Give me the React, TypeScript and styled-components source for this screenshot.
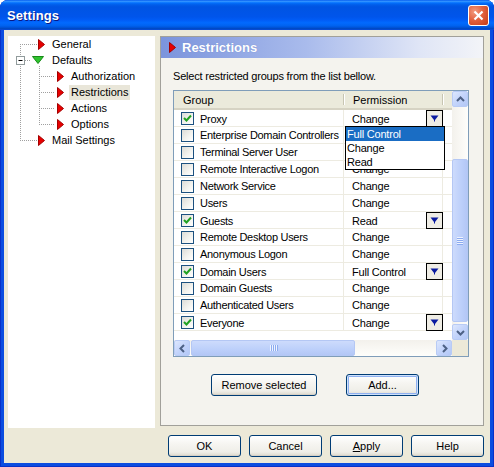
import React from 'react';
import styled, { createGlobalStyle } from 'styled-components';

const font = `"Liberation Sans", Arial, sans-serif`;

const GlobalStyle = createGlobalStyle`
  html, body { margin: 0; padding: 0; background: #ffffff; }
  body { font-family: ${font}; font-size: 11px; color: #000; }
  * { box-sizing: border-box; }
`;

const Window = styled.div`
  width: 494px;
  height: 467px;
  display: flex;
  flex-direction: column;
  background: #0b4de0;
  border-radius: 8px 8px 0 0;
  overflow: hidden;
  box-shadow: inset 1px 0 #0831c9, inset -1px 0 #0831c9, inset 0 -1px #0831c9;
`;

const TitleBar = styled.div`
  height: 30px;
  flex: none;
  display: flex;
  align-items: center;
  justify-content: space-between;
  padding: 0 5px 0 7px;
  background: linear-gradient(
    #0058ee 0%, #3593ff 4%, #288eff 6%, #127dff 8%, #036ffc 10%, #0262ee 14%,
    #0057e5 20%, #0054e3 24%, #0055eb 56%, #005bf5 66%, #026afe 76%, #0062ef 86%,
    #0052d6 92%, #0047c0 96%, #0b4de0 100%
  );
`;

const Title = styled.div`
  color: #fff;
  font: bold 13px ${font};
  text-shadow: 1px 1px #0a1883;
  letter-spacing: 0.1px;
`;

const CloseButton = styled.div`
  width: 21px;
  height: 21px;
  border: 1px solid #fff;
  border-radius: 3px;
  background: radial-gradient(circle at 30% 30%, #f39b7f 0%, #e2623f 45%, #c53b16 100%);
  display: flex;
  align-items: center;
  justify-content: center;
`;

const Client = styled.div`
  flex: 1;
  margin: 0 4px 4px;
  background: #ece9d8;
  display: flex;
  flex-direction: column;
  padding: 6px 6px 0 4px;
`;

const Main = styled.div`
  display: flex;
  gap: 5px;
  height: 392px;
  align-items: flex-start;
`;

const Tree = styled.div`
  width: 147px;
  height: 392px;
  background: #fff;
  position: relative;
`;

const TreeLines = styled.svg`
  position: absolute;
  left: 0;
  top: 0;
  pointer-events: none;
`;

const TreeRow = styled.div<{ $level: number }>`
  position: relative;
  height: 16px;
  display: flex;
  align-items: center;
  padding-left: ${p => 30 + p.$level * 19}px;
`;

const NodeIcon = styled.span<{ $shift?: number }>`
  width: 12px;
  display: flex;
  align-items: center;
  margin-left: ${p => p.$shift ?? 0}px;
  margin-right: ${p => -(p.$shift ?? 0)}px;
`;

const NodeLabel = styled.span<{ $selected?: boolean }>`
  padding: 0 2px;
  line-height: 15px;
  white-space: nowrap;
  background: ${p => (p.$selected ? '#e9e6d9' : 'transparent')};
`;

const Panel = styled.div`
  width: 324px;
  height: 390px;
  border: 1px solid #a1a09a;
  background: #f4f3ee;
  display: flex;
  flex-direction: column;
`;

const PanelHeader = styled.div`
  height: 21px;
  display: flex;
  align-items: center;
  gap: 6px;
  padding-left: 8px;
  background: linear-gradient(to right, #7b94dc 0%, #a9bbec 45%, #dfe5f6 80%, #f3f4f8 100%);
  color: #fff;
  font: bold 13px ${font};
  text-shadow: 0 0 1px #6a82c8;
`;

const PanelBody = styled.div`
  display: flex;
  flex-direction: column;
  padding: 0 14px 0 12px;
`;

const Description = styled.div`
  margin-top: 11px;
  line-height: 14px;
  letter-spacing: -0.2px;
`;

const ListBox = styled.div`
  margin-top: 7px;
  width: 296px;
  height: 267px;
  border: 1px solid #7f9db9;
  background: #fff;
  display: grid;
  grid-template-columns: 1fr 16px;
  grid-template-rows: 1fr 16px;
`;

const ListView = styled.div`
  position: relative;
`;

const HeaderRow = styled.div`
  height: 19px;
  display: grid;
  grid-template-columns: 170px 99px 1fr;
  background: #ebeadb;
  border-bottom: 2px solid #d6d3c3;
`;

const HeaderCell = styled.div`
  display: flex;
  align-items: center;
  padding-left: 9px;
  position: relative;
  &:not(:last-child)::after {
    content: '';
    position: absolute;
    right: 0;
    top: 3px;
    bottom: 3px;
    width: 1px;
    background: #c7c5b2;
    box-shadow: 1px 0 #fff;
  }
`;

const Row = styled.div`
  height: 17px;
  display: grid;
  grid-template-columns: 170px 99px 1fr;
  border-bottom: 1px solid #edebe1;
`;

const GroupCell = styled.div`
  display: flex;
  align-items: center;
  gap: 6px;
  padding-left: 7px;
  border-right: 1px solid #edebe1;
  white-space: nowrap;
  overflow: hidden;
  letter-spacing: -0.3px;
`;

const PermCell = styled.div`
  display: flex;
  align-items: center;
  justify-content: space-between;
  padding-left: 8px;
  border-right: 1px solid #edebe1;
  position: relative;
  letter-spacing: -0.2px;
`;

const CheckBox = styled.span`
  width: 13px;
  height: 13px;
  flex: none;
  border: 1px solid #1c5180;
  background: linear-gradient(135deg, #dcdcd7 0%, #f4f4f0 60%, #ffffff 100%);
  display: flex;
  align-items: center;
  justify-content: center;
`;

const DropButton = styled.span`
  width: 17px;
  height: 17px;
  margin-right: -1px;
  border: 1px solid #000;
  background: #efede5;
  display: flex;
  align-items: center;
  justify-content: center;
`;

const Popup = styled.div`
  position: absolute;
  left: 1px;
  top: 16px;
  width: 100px;
  border: 1px solid #000;
  background: #fff;
  z-index: 2;
`;

const PopupItem = styled.div<{ $active?: boolean }>`
  height: 14px;
  line-height: 14px;
  padding-left: 1px;
  background: ${p => (p.$active ? '#1a6dc4' : '#fff')};
  color: ${p => (p.$active ? '#fff' : '#000')};
`;

const VScroll = styled.div`
  display: flex;
  flex-direction: column;
  background: linear-gradient(to right, #f3f1ec, #fefefb);
`;

const HScroll = styled.div`
  display: flex;
  background: linear-gradient(#f3f1ec, #fefefb);
`;

const Corner = styled.div`
  background: #ece9d8;
`;

const ScrollButton = styled.div`
  width: 16px;
  height: 16px;
  flex: none;
  border: 1px solid #b8cbf5;
  border-radius: 2px;
  background: linear-gradient(135deg, #dde7fd 0%, #c3d4fb 50%, #b2c7f6 100%);
  display: flex;
  align-items: center;
  justify-content: center;
`;

const VTrack = styled.div`
  flex: 1;
  padding-top: 52px;
`;

const HTrack = styled.div`
  flex: 1;
  padding-left: 1px;
`;

const Thumb = styled.div<{ $vertical?: boolean }>`
  ${p => (p.$vertical ? 'height: 163px; width: 16px;' : 'width: 164px; height: 16px;')}
  border: 1px solid #b4c7f4;
  border-radius: 2px;
  background: ${p =>
    p.$vertical
      ? 'linear-gradient(to right, #cddbfc, #bccffa 60%, #b3c7f6)'
      : 'linear-gradient(#cddbfc, #bccffa 60%, #b3c7f6)'};
  display: flex;
  flex-direction: ${p => (p.$vertical ? 'column' : 'row')};
  align-items: center;
  justify-content: center;
  gap: 1px;
`;

const Grip = styled.span<{ $vertical?: boolean }>`
  ${p => (p.$vertical ? 'width: 6px; height: 1px;' : 'width: 1px; height: 6px;')}
  background: #eef3fe;
  box-shadow: ${p => (p.$vertical ? '0 1px #8cabf0' : '1px 0 #8cabf0')};
`;

const ActionRow = styled.div`
  display: flex;
  gap: 29px;
  margin-top: 17px;
  padding-left: 38px;
`;

const Button = styled.button<{ $w?: number; $focused?: boolean }>`
  height: 22px;
  width: ${p => p.$w ?? 73}px;
  padding: 0;
  font: 11px ${font};
  color: #000;
  border: 1px solid #003c74;
  border-radius: 3px;
  background: linear-gradient(#ffffff 0%, #f6f5f1 40%, #efeee8 80%, #dcd8cc 100%);
  box-shadow: ${p =>
    p.$focused ? 'inset 0 0 0 1px #cee1fb, inset 0 0 0 2px #8fb0f0' : 'inset 0 -1px #d6d0c5'};
`;

const Footer = styled.div`
  display: flex;
  justify-content: flex-end;
  gap: 8px;
  margin-top: 7px;
`;

const RedArrow = () => (
  <svg width="7" height="11" viewBox="0 0 7 11">
    <polygon points="0.5,0.5 6.5,5.5 0.5,10.5" fill="#e80000" stroke="#a30000" strokeWidth="1" />
  </svg>
);

const GreenArrow = () => (
  <svg width="12" height="8" viewBox="0 0 12 8">
    <polygon points="0.5,0.5 11.5,0.5 6,7.5" fill="#2fc42f" stroke="#178a17" strokeWidth="1" />
  </svg>
);

const Check = () => (
  <svg width="9" height="9" viewBox="0 0 9 9">
    <path d="M1 4 L3.5 6.5 L8 1.5" fill="none" stroke="#21a121" strokeWidth="2" />
  </svg>
);

const DropArrow = () => (
  <svg width="9" height="7" viewBox="0 0 9 7">
    <polygon points="0.5,0.5 8.5,0.5 5,5 4,5" fill="#0a1aa0" />
    <rect x="4" y="5" width="1" height="1.5" fill="#0a1aa0" />
  </svg>
);

const Chevron = ({ rotate }: { rotate: number }) => (
  <svg width="9" height="9" viewBox="0 0 9 9" style={{ transform: `rotate(${rotate}deg)` }}>
    <path d="M1 6 L4.5 2.5 L8 6" fill="none" stroke="#4d6185" strokeWidth="2" />
  </svg>
);

type Node = { label: string; level: number; icon: 'red' | 'green'; selected?: boolean };

const nodes: Node[] = [
  { label: 'General', level: 0, icon: 'red' },
  { label: 'Defaults', level: 0, icon: 'green' },
  { label: 'Authorization', level: 1, icon: 'red' },
  { label: 'Restrictions', level: 1, icon: 'red', selected: true },
  { label: 'Actions', level: 1, icon: 'red' },
  { label: 'Options', level: 1, icon: 'red' },
  { label: 'Mail Settings', level: 0, icon: 'red' },
];

type Group = { name: string; checked: boolean; perm: string };

const groups: Group[] = [
  { name: 'Proxy', checked: true, perm: 'Change' },
  { name: 'Enterprise Domain Controllers', checked: false, perm: 'Change' },
  { name: 'Terminal Server User', checked: false, perm: 'Change' },
  { name: 'Remote Interactive Logon', checked: false, perm: 'Change' },
  { name: 'Network Service', checked: false, perm: 'Change' },
  { name: 'Users', checked: false, perm: 'Change' },
  { name: 'Guests', checked: true, perm: 'Read' },
  { name: 'Remote Desktop Users', checked: false, perm: 'Change' },
  { name: 'Anonymous Logon', checked: false, perm: 'Change' },
  { name: 'Domain Users', checked: true, perm: 'Full Control' },
  { name: 'Domain Guests', checked: false, perm: 'Change' },
  { name: 'Authenticated Users', checked: false, perm: 'Change' },
  { name: 'Everyone', checked: true, perm: 'Change' },
];

const dot = { stroke: '#a0a0a0', strokeDasharray: '1 1', shapeRendering: 'crispEdges' as const };

const App = () => {
  return (
    <Window>
      <GlobalStyle />
      <TitleBar>
        <Title>Settings</Title>
        <CloseButton>
          <svg width="11" height="11" viewBox="0 0 11 11">
            <path d="M1.5 1.5 L9.5 9.5 M9.5 1.5 L1.5 9.5" stroke="#fff" strokeWidth="2.2" />
          </svg>
        </CloseButton>
      </TitleBar>

      <Client>
        <Main>
          <Tree>
            <TreeLines width="147" height="120">
              <line x1="12.5" y1="8" x2="12.5" y2="104" {...dot} />
              <line x1="12" y1="8.5" x2="29" y2="8.5" {...dot} />
              <line x1="17" y1="24.5" x2="23" y2="24.5" {...dot} />
              <line x1="12" y1="104.5" x2="29" y2="104.5" {...dot} />
              <line x1="31.5" y1="30" x2="31.5" y2="88" {...dot} />
              {[40, 56, 72, 88].map(y => (
                <line key={y} x1="31" y1={y + 0.5} x2="47" y2={y + 0.5} {...dot} />
              ))}
              <rect x="8.5" y="20.5" width="8" height="8" fill="#fff" stroke="#919b9c" />
              <line x1="10.5" y1="24.5" x2="14.5" y2="24.5" stroke="#000" />
            </TreeLines>
            {nodes.map(n => (
              <TreeRow key={n.label} $level={n.level}>
                <NodeIcon $shift={n.icon === 'green' ? -6 : 0}>
                  {n.icon === 'red' ? <RedArrow /> : <GreenArrow />}
                </NodeIcon>
                <NodeLabel $selected={n.selected}>{n.label}</NodeLabel>
              </TreeRow>
            ))}
          </Tree>

          <Panel>
            <PanelHeader>
              <RedArrow />
              Restrictions
            </PanelHeader>
            <PanelBody>
              <Description>Select restricted groups from the list bellow.</Description>
              <ListBox>
                <ListView>
                  <HeaderRow>
                    <HeaderCell>Group</HeaderCell>
                    <HeaderCell>Permission</HeaderCell>
                    <HeaderCell />
                  </HeaderRow>
                  {groups.map((g, i) => (
                    <Row key={g.name}>
                      <GroupCell>
                        <CheckBox>{g.checked && <Check />}</CheckBox>
                        {g.name}
                      </GroupCell>
                      <PermCell>
                        {g.perm}
                        {g.checked && (
                          <DropButton>
                            <DropArrow />
                          </DropButton>
                        )}
                        {i === 0 && (
                          <Popup>
                            <PopupItem $active>Full Control</PopupItem>
                            <PopupItem>Change</PopupItem>
                            <PopupItem>Read</PopupItem>
                          </Popup>
                        )}
                      </PermCell>
                      <div />
                    </Row>
                  ))}
                </ListView>
                <VScroll>
                  <ScrollButton>
                    <Chevron rotate={0} />
                  </ScrollButton>
                  <VTrack>
                    <Thumb $vertical>
                      <Grip $vertical />
                      <Grip $vertical />
                      <Grip $vertical />
                      <Grip $vertical />
                    </Thumb>
                  </VTrack>
                  <ScrollButton>
                    <Chevron rotate={180} />
                  </ScrollButton>
                </VScroll>
                <HScroll>
                  <ScrollButton>
                    <Chevron rotate={-90} />
                  </ScrollButton>
                  <HTrack>
                    <Thumb>
                      <Grip />
                      <Grip />
                      <Grip />
                      <Grip />
                    </Thumb>
                  </HTrack>
                  <ScrollButton>
                    <Chevron rotate={90} />
                  </ScrollButton>
                </HScroll>
                <Corner />
              </ListBox>
              <ActionRow>
                <Button $w={106}>Remove selected</Button>
                <Button $focused>Add...</Button>
              </ActionRow>
            </PanelBody>
          </Panel>
        </Main>

        <Footer>
          <Button>OK</Button>
          <Button>Cancel</Button>
          <Button>
            <u>A</u>pply
          </Button>
          <Button>Help</Button>
        </Footer>
      </Client>
    </Window>
  );
};

export default App;
